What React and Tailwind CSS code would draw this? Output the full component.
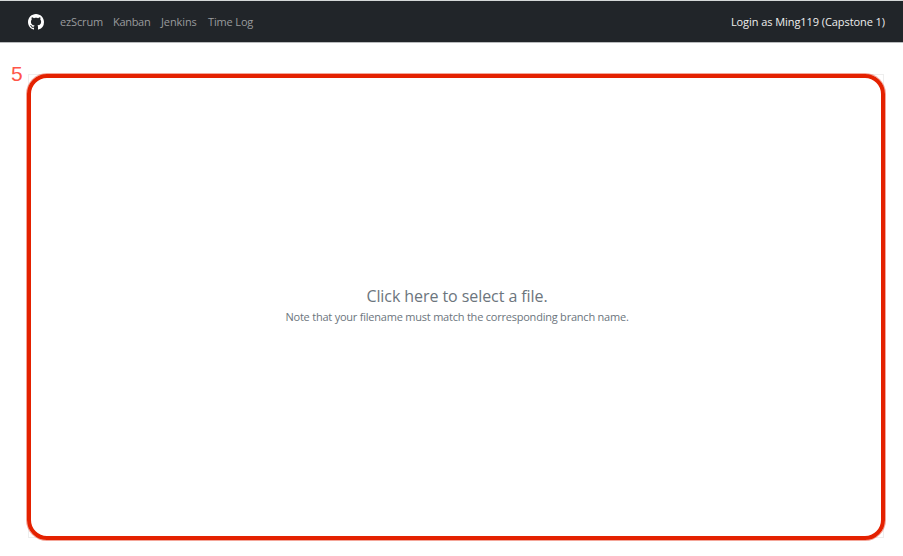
const links = [
  { label: 'ezScrum', style: 'w-[53px] tracking-[-0.15px]' },
  { label: 'Kanban', style: 'w-[48px] tracking-[-0.3px]' },
  { label: 'Jenkins', style: 'w-[47px] tracking-[-0.1px]' },
  { label: 'Time Log', style: 'w-[50px] tracking-[-0.15px]' },
];

function GitHubMark() {
  return (
    <svg viewBox="0 0 16 16" className="h-4 w-4 fill-white" aria-hidden="true">
      <path d="M8 0C3.58 0 0 3.58 0 8c0 3.54 2.29 6.53 5.47 7.59.4.07.55-.17.55-.38 0-.19-.01-.82-.01-1.49-2.01.37-2.53-.49-2.69-.94-.09-.23-.48-.94-.82-1.13-.28-.15-.68-.52-.01-.53.63-.01 1.08.58 1.23.82.72 1.21 1.87.87 2.33.66.07-.52.28-.87.51-1.07-1.78-.2-3.64-.89-3.64-3.95 0-.87.31-1.59.82-2.15-.08-.2-.36-1.02.08-2.12 0 0 .67-.21 2.2.82.64-.18 1.32-.27 2-.27s1.36.09 2 .27c1.53-1.04 2.2-.82 2.2-.82.44 1.1.16 1.92.08 2.12.51.56.82 1.27.82 2.15 0 3.07-1.87 3.75-3.65 3.95.29.25.54.73.54 1.48 0 1.07-.01 1.93-.01 2.2 0 .21.15.46.55.38A8.01 8.01 0 0 0 16 8c0-4.42-3.58-8-8-8z" />
    </svg>
  );
}

export default function App() {
  return (
    <div className="flex h-[556px] w-[903px] flex-col overflow-hidden bg-white font-['Open_Sans',sans-serif]">
      <header className="flex h-[43px] shrink-0 items-center whitespace-nowrap border-y border-t-[#d5d8d8] border-b-[#b9bbbd] bg-[#212529] pr-[18px] pl-7 text-[11px]">
        <GitHubMark />
        <nav className="ml-4 flex pt-[2px] text-[#999b9d]">
          {links.map((link) => (
            <a key={link.label} className={link.style}>{link.label}</a>
          ))}
        </nav>
        <span className="ml-auto pt-[2px] tracking-[-0.07px] text-[#eeeeee]">Login as Ming119 (Capstone 1)</span>
      </header>
      <main className="flex flex-1 items-start">
        <div className="mt-[17px] w-[27px] shrink-0 pl-[11px] font-['Liberation_Sans',sans-serif] text-[21px] leading-7 text-[#ff5549]">5</div>
        <div className="relative mt-[31px] h-[466px] w-[858px] shrink-0">
          <div className="absolute inset-x-[1px] top-0 bottom-[2px] border border-[#eeeeee]" />
          <button className="relative flex h-full w-full flex-col items-center justify-center rounded-[20px] border-4 border-[#e42100] pb-1 pl-[2px] text-[#6c757d] ring-1 ring-[#e42100]/40">
            <span className="whitespace-nowrap text-[16px] leading-6 tracking-[-0.07px]">Click here to select a file.</span>
            <span className="whitespace-nowrap text-[11px] leading-[18px] tracking-[-0.22px]">Note that your filename must match the corresponding branch name.</span>
          </button>
        </div>
      </main>
    </div>
  );
}
